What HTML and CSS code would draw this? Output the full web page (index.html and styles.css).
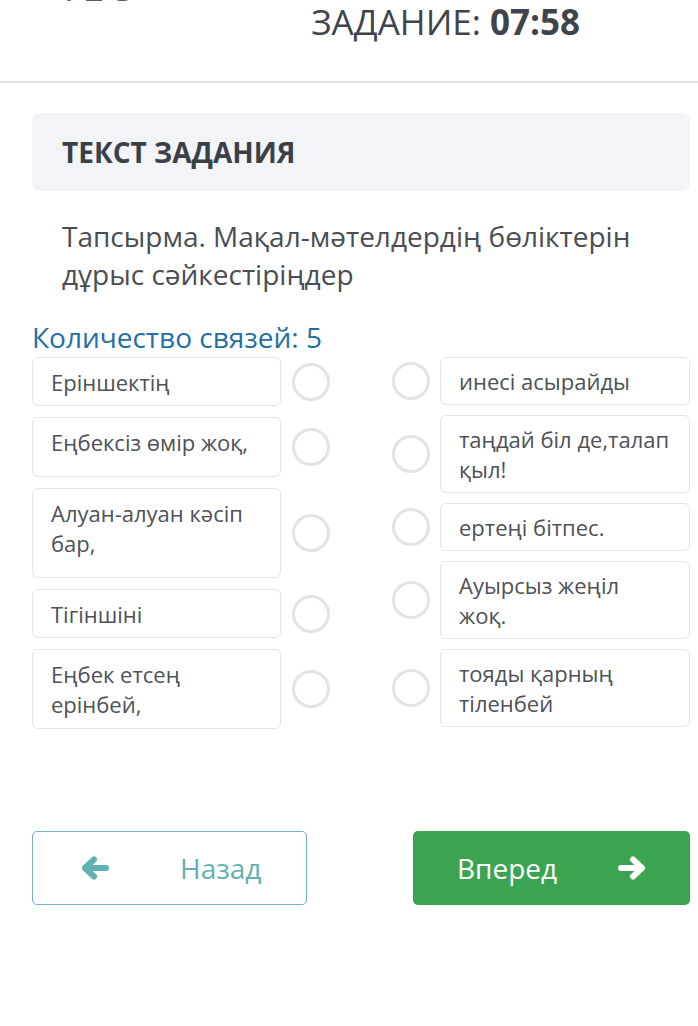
FILE: index.html
```html
<!DOCTYPE html>
<html lang="ru">
<head>
<meta charset="utf-8">
<link rel="stylesheet" href="styles.css">
</head>
<body>
<header class="top">
  <div class="logo">ТЕС</div>
  <div class="timer">ЗАДАНИЕ: <b>07:58</b></div>
</header>
<main class="page">
  <section class="task-head">ТЕКСТ ЗАДАНИЯ</section>
  <p class="task-text">Тапсырма. Мақал-мәтелдердің бөліктерін дұрыс сәйкестіріңдер</p>
  <div class="count">Количество связей: 5</div>
  <div class="match">
    <div class="col col-left">
      <div class="row"><div class="item">Еріншектің</div><span class="dot"></span></div>
      <div class="row"><div class="item h60">Еңбексіз өмір жоқ,</div><span class="dot"></span></div>
      <div class="row"><div class="item h90">Алуан-алуан кәсіп бар,</div><span class="dot"></span></div>
      <div class="row"><div class="item">Тігіншіні</div><span class="dot"></span></div>
      <div class="row"><div class="item h80">Еңбек етсең ерінбей,</div><span class="dot"></span></div>
    </div>
    <div class="col col-right">
      <div class="row"><span class="dot"></span><div class="item">инесі асырайды</div></div>
      <div class="row"><span class="dot"></span><div class="item">таңдай біл де,талап қыл!</div></div>
      <div class="row"><span class="dot"></span><div class="item">ертеңі бітпес.</div></div>
      <div class="row"><span class="dot"></span><div class="item">Ауырсыз жеңіл жоқ.</div></div>
      <div class="row"><span class="dot"></span><div class="item">тояды қарның тіленбей</div></div>
    </div>
  </div>
  <div class="nav">
    <button class="btn btn-back">
      <svg class="ico" viewBox="0 0 28 24" width="28" height="24"><path d="M25 12H5M13 3.5L4 12l9 8.5" fill="none" stroke="currentColor" stroke-width="6" stroke-linecap="round" stroke-linejoin="round"/></svg>
      <span>Назад</span>
    </button>
    <button class="btn btn-next">
      <span>Вперед</span>
      <svg class="ico" viewBox="0 0 28 24" width="28" height="24"><path d="M3 12h20M15 3.5l9 8.5-9 8.5" fill="none" stroke="currentColor" stroke-width="6" stroke-linecap="round" stroke-linejoin="round"/></svg>
    </button>
  </div>
</main>
</body>
</html>
```
FILE: styles.css
```css
* { box-sizing: border-box; }
html, body { margin: 0; padding: 0; background: #fff; }
body {
  font-family: "Open Sans", "Noto Sans", sans-serif;
  color: #4a4d52;
  width: 698px;
}
.top {
  height: 83px;
  border-bottom: 2px solid #e3e3e3;
  display: flex;
  align-items: flex-start;
  overflow: hidden;
}
.logo {
  margin-top: -34px;
  margin-left: 58px;
  font-size: 40px;
  line-height: 40px;
  color: #5a5e63;
  letter-spacing: 2px;
}
.timer {
  margin-left: auto;
  margin-right: 118px;
  margin-top: 1px;
  font-size: 35px;
  line-height: 42px;
  color: #3f444a;
}
.timer b { font-weight: 700; }
.page { padding: 30px 8px 0 32px; }
.task-head {
  height: 78px;
  background: #f2f4f7;
  border-radius: 8px;
  padding-left: 30px;
  display: flex;
  align-items: center;
  font-weight: 700;
  font-size: 28px;
  color: #3b4047;
}
.task-text {
  margin: 26px 0 0 0;
  padding-left: 30px;
  font-size: 28px;
  line-height: 38px;
  color: #4a4d52;
}
.count {
  margin-top: 27px;
  font-size: 28px;
  line-height: 34px;
  color: #1f6fa5;
}
.match {
  margin-top: 3px;
  display: flex;
  justify-content: space-between;
  align-items: flex-start;
  width: 658px;
}
.col { display: flex; flex-direction: column; }
.col-left { gap: 11px; }
.col-right { gap: 10px; }
.row { display: flex; align-items: center; }
.col-left .row { gap: 11px; }
.col-right .row { gap: 10px; }
.item {
  width: 250px;
  border: 1px solid #e2e4e7;
  border-radius: 6px;
  padding: 8px 18px;
  font-size: 22px;
  line-height: 30px;
  color: #4e5156;
  background: #fff;
}
.col-left .item { width: 249px; padding: 9px 18px 8px; }
.h60 { min-height: 60px; }
.h80 { min-height: 80px; }
.h90 { min-height: 90px; }
.dot {
  width: 38px;
  height: 38px;
  border: 3px solid #e1e3e4;
  border-radius: 50%;
  flex: none;
}
.nav {
  margin-top: 102px;
  width: 658px;
  display: flex;
  justify-content: space-between;
}
.btn {
  height: 74px;
  border-radius: 5px;
  display: flex;
  align-items: center;
  font-family: inherit;
  font-size: 28px;
  cursor: pointer;
}
.btn-back {
  width: 275px;
  background: #fff;
  border: 1px solid #75b6ba;
  color: #5fb1b2;
  padding: 0 0 0 48px;
  gap: 71px;
}
.btn-next {
  width: 277px;
  background: #3aa453;
  border: none;
  color: #fff;
  padding: 0 44px;
  justify-content: space-between;
}
.ico { display: block; }
```
